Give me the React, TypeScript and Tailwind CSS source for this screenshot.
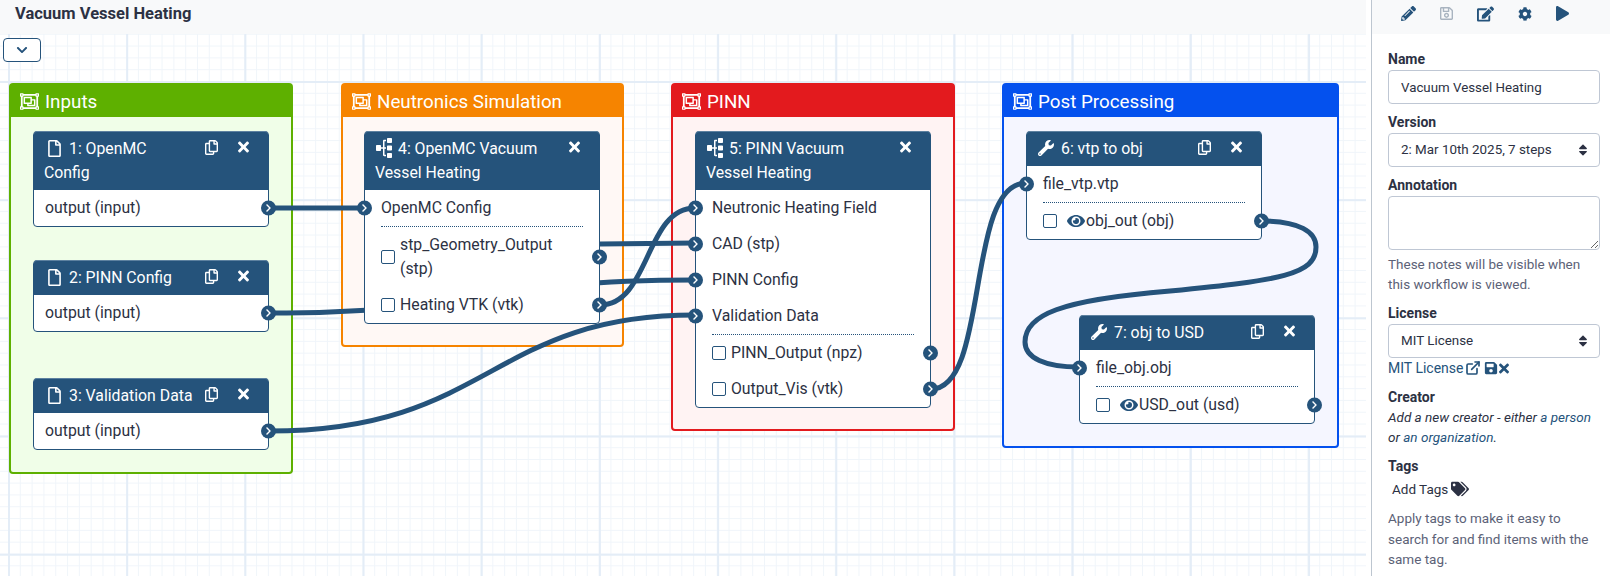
import React from 'react';
import {
  FaChevronDown,
  FaChevronRight,
  FaCog,
  FaEdit,
  FaEye,
  FaPencilAlt,
  FaPlay,
  FaRegCopy,
  FaRegFile,
  FaRegObjectGroup,
  FaRegSave,
  FaSave,
  FaSitemap,
  FaSort,
  FaTags,
  FaTimes,
  FaWrench,
} from 'react-icons/fa';
import { ExternalLink } from 'lucide-react';

type Row =
  | { kind: 'in'; label: string }
  | { kind: 'out'; label: React.ReactNode; eye?: boolean }
  | { kind: 'sep' };

function Terminal({ side }: { side: 'left' | 'right' }) {
  return (
    <div
      className={`absolute top-1/2 -translate-y-1/2 w-[15px] h-[15px] rounded-full bg-[#25537b] flex items-center justify-center text-white z-10 ${
        side === 'left' ? '-left-[8px]' : '-right-[8px]'
      }`}
    >
      <FaChevronRight className="w-[9px] h-[9px]" />
    </div>
  );
}

function NodeRow({ row }: { row: Row }) {
  if (row.kind === 'sep') {
    return <div className="mx-4 border-b border-dotted border-[#25537b]" />;
  }
  if (row.kind === 'in') {
    return (
      <div className="relative px-4 py-1.5 h-9 leading-6">
        <Terminal side="left" />
        {row.label}
      </div>
    );
  }
  return (
    <div className="relative pl-[16px] pr-4 py-1.5 leading-6 flex items-center">
      <span className="shrink-0 w-[14px] h-[14px] mr-[5px] border-[1.5px] border-[#25537b] rounded-[2px] bg-white" />
      {row.eye && <FaEye className="shrink-0 w-[18px] h-[18px] ml-[5px] mr-[1px] text-[#25537b]" />}
      <span>{row.label}</span>
      <Terminal side="right" />
    </div>
  );
}

function PlainOutput({ label }: { label: string }) {
  return (
    <div className="relative px-[11px] py-1.5 h-9 leading-6">
      {label}
      <Terminal side="right" />
    </div>
  );
}

function NodeBox({
  className,
  icon,
  title,
  copy = true,
  children,
}: {
  className: string;
  icon: 'file' | 'sub' | 'tool';
  title: string;
  copy?: boolean;
  children: React.ReactNode;
}) {
  return (
    <div className={`absolute z-20 w-[236px] rounded-[4px] border border-[#25537b] bg-white text-[15.8px] text-[#2c3143] ${className}`}>
      <div className="rounded-t-[3px] bg-[#25537b] text-white pl-[10px] pr-[19px] py-[5px] leading-6 border-t border-t-[#5d81a0] -mt-px whitespace-pre-line">
        <span className="float-right flex items-center h-6 -mt-[2px]">
          {copy && <FaRegCopy className="w-[13px] h-[15px] mr-[20px]" />}
          <FaTimes className="w-[11px] h-[16px]" />
        </span>
        {icon === 'file' && <FaRegFile className="inline w-[13px] h-[17px] ml-[4px] mr-[8px] align-[-3px]" />}
        {icon === 'sub' && <FaSitemap className="inline w-[20px] h-[16px] -ml-[1px] mr-[4px] -rotate-90 align-[-2px]" />}
        {icon === 'tool' && <FaWrench className="inline w-[16px] h-[16px] ml-[1px] mr-[7px] align-[-2px]" />}
        {title}
      </div>
      {children}
    </div>
  );
}

function Rows({ rows }: { rows: Row[] }) {
  return (
    <>
      {rows.map((row, i) => (
        <NodeRow key={i} row={row} />
      ))}
    </>
  );
}

function Frame({
  className,
  head,
  title,
}: {
  className: string;
  head: string;
  title: string;
}) {
  return (
    <div className={`absolute top-[49px] rounded-[4px] border-2 ${className}`}>
      <div className={`h-[32px] text-white text-[18.8px] leading-8 pl-[9px] pt-[1px] flex items-center gap-[6px] ${head}`}>
        <FaRegObjectGroup className="w-[19px] h-[19px]" />
        {title}
      </div>
    </div>
  );
}

function Field({ label, children }: { label: string; children: React.ReactNode }) {
  return (
    <div>
      <div className="font-bold leading-[21px] text-[#2c3143]">{label}</div>
      {children}
    </div>
  );
}

function SelectBox({ value }: { value: string }) {
  return (
    <div className="relative">
      <select
        defaultValue={value}
        className="w-full h-[34px] appearance-none rounded-[4px] border border-[#bfc7d4] bg-white pl-3 text-[13.4px] text-[#2c3143] outline-none"
      >
        <option>{value}</option>
      </select>
      <FaSort className="absolute right-[12px] top-[10px] w-[10px] h-[14px] text-[#2c3143]" />
    </div>
  );
}

export default function App() {
  return (
    <div className="flex h-[576px] w-[1610px] overflow-hidden bg-white font-['Roboto',sans-serif] text-[14px] text-[#2c3143]">
      {/* Editor canvas */}
      <div className="w-[1366px] flex flex-col">
        <div className="h-[34px] shrink-0 bg-[#f8f9fa] pl-[15px] pt-[4px] font-bold text-[16.5px] leading-5 text-[#2c3143]">
          Vacuum Vessel Heating
        </div>
        <div className="relative flex-1 overflow-hidden bg-white bg-[linear-gradient(to_right,#e4edf7_2px,transparent_2px),linear-gradient(to_bottom,#e4edf7_2px,transparent_2px),linear-gradient(to_right,#f0f5fa_1px,transparent_1px),linear-gradient(to_bottom,#f0f5fa_1px,transparent_1px)] bg-[size:118.2px_118.2px,118.2px_118.2px,11.82px_11.82px,11.82px_11.82px] bg-[position:8px_47px]">
          <button className="absolute left-[3px] top-[4px] z-30 w-[38px] h-[24px] rounded-[4px] border border-[#25537b] bg-white flex items-center justify-center text-[#25537b]">
            <FaChevronDown className="w-[12px] h-[12px]" />
          </button>

          <Frame className="left-[9px] w-[284px] h-[391px] border-[#5eb000] bg-[#f0fee8]" head="bg-[#5eb000]" title="Inputs" />
          <Frame className="left-[341px] w-[283px] h-[264px] border-[#f68400] bg-[#fff8f5]" head="bg-[#f68400]" title="Neutronics Simulation" />
          <Frame className="left-[671px] w-[284px] h-[348px] border-[#e31a1e] bg-[#fff3f3]" head="bg-[#e31a1e]" title="PINN" />
          <Frame className="left-[1002px] w-[337px] h-[365px] border-[#0451ee] bg-[#f5f6ff]" head="bg-[#0451ee]" title="Post Processing" />

          <svg className="absolute left-0 top-0 z-10" width="1366" height="542" viewBox="0 34 1366 542" fill="none">
            <g stroke="#25537b" strokeWidth="5">
              <path d="M269 208 L364 208" />
              <path d="M269 313 C480 313 480 280 695 280" />
              <path d="M269 431 C490 431 490 315 695 315" />
              <path d="M600 244 L695 243" />
              <path d="M600 305 C650 305 645 208 695 208" />
              <path d="M931 389 C990 389 965 183 1026 183" />
              <path d="M1261 221 C1300 221 1316 232 1316 247 C1316 275 1280 280 1170 291 C1060 300 1025 315 1025 342 C1025 358 1045 367 1079 367" />
            </g>
          </svg>

          <NodeBox className="left-[33px] top-[97px]" icon="file" title={'1: OpenMC\nConfig'}>
            <PlainOutput label="output (input)" />
          </NodeBox>
          <NodeBox className="left-[33px] top-[226px]" icon="file" title="2: PINN Config">
            <PlainOutput label="output (input)" />
          </NodeBox>
          <NodeBox className="left-[33px] top-[344px]" icon="file" title="3: Validation Data">
            <PlainOutput label="output (input)" />
          </NodeBox>
          <NodeBox className="left-[364px] top-[97px]" icon="sub" title={'4: OpenMC Vacuum\nVessel Heating'} copy={false}>
            <Rows
              rows={[
                { kind: 'in', label: 'OpenMC Config' },
                { kind: 'sep' },
                { kind: 'out', label: 'stp_Geometry_Output (stp)' },
                { kind: 'out', label: 'Heating VTK (vtk)' },
              ]}
            />
          </NodeBox>
          <NodeBox className="left-[695px] top-[97px]" icon="sub" title={'5: PINN Vacuum\nVessel Heating'} copy={false}>
            <Rows
              rows={[
                { kind: 'in', label: 'Neutronic Heating Field' },
                { kind: 'in', label: 'CAD (stp)' },
                { kind: 'in', label: 'PINN Config' },
                { kind: 'in', label: 'Validation Data' },
                { kind: 'sep' },
                { kind: 'out', label: 'PINN_Output (npz)' },
                { kind: 'out', label: 'Output_Vis (vtk)' },
              ]}
            />
          </NodeBox>
          <NodeBox className="left-[1026px] top-[97px]" icon="tool" title="6: vtp to obj">
            <Rows
              rows={[
                { kind: 'in', label: 'file_vtp.vtp' },
                { kind: 'sep' },
                { kind: 'out', label: 'obj_out (obj)', eye: true },
              ]}
            />
          </NodeBox>
          <NodeBox className="left-[1079px] top-[281px]" icon="tool" title="7: obj to USD">
            <Rows
              rows={[
                { kind: 'in', label: 'file_obj.obj' },
                { kind: 'sep' },
                { kind: 'out', label: 'USD_out (usd)', eye: true },
              ]}
            />
          </NodeBox>
        </div>
      </div>

      {/* Side panel */}
      <div className="ml-[5px] w-[239px] border-l border-[#bdc6d0] flex flex-col">
        <div className="h-[34px] shrink-0 bg-[#f8f9fa] pl-[29px] pb-[7px] flex items-center gap-[24px] text-[#25537b]">
          <FaPencilAlt className="w-[15px] h-[15px]" />
          <FaRegSave className="w-[13px] h-[15px] text-[#a9b4c0]" />
          <FaEdit className="w-[17px] h-[16px]" />
          <FaCog className="w-[14px] h-[14px]" />
          <FaPlay className="w-[13px] h-[15px]" />
        </div>
        <div className="pl-4 pr-[10px] pt-[15px]">
          <Field label="Name">
            <input
              readOnly
              value="Vacuum Vessel Heating"
              className="w-full h-[34px] rounded-[4px] border border-[#bfc7d4] bg-white px-3 text-[13.3px] text-[#2c3143] outline-none"
            />
          </Field>
          <div className="mt-2">
            <Field label="Version">
              <SelectBox value="2: Mar 10th 2025, 7 steps" />
            </Field>
          </div>
          <div className="mt-2">
            <Field label="Annotation">
              <textarea className="block w-full h-[54px] rounded-[4px] border border-[#bfc7d4] bg-white outline-none" />
            </Field>
            <p className="mt-1 leading-5 text-[13.5px] text-[#5c6277]">These notes will be visible when this workflow is viewed.</p>
          </div>
          <div className="mt-[9px]">
            <Field label="License">
              <SelectBox value="MIT License" />
            </Field>
            <div className="h-5 flex items-center text-[#25537b]">
              MIT License
              <ExternalLink className="w-[16px] h-[16px] ml-[2px]" strokeWidth={2.5} />
              <FaSave className="w-[14px] h-[14px] ml-[3px] text-[#25537b]" />
              <FaTimes className="w-[10px] h-[15px] ml-[1px] text-[#25537b]" />
            </div>
          </div>
          <div className="mt-[9px]">
            <div className="font-bold leading-5">Creator</div>
            <p className="italic leading-5 text-[13.5px]">
              Add a new creator - either <span className="text-[#25537b]">a person</span> or{' '}
              <span className="text-[#25537b]">an organization</span>.
            </p>
          </div>
          <div className="mt-[9px]">
            <div className="font-bold leading-5">Tags</div>
            <div className="mt-[3px] pl-[4px] leading-5 text-[13.5px] flex items-center gap-[3px]">
              Add Tags <FaTags className="w-[18px] h-[16px]" />
            </div>
            <p className="mt-[9px] leading-[20.5px] text-[13.5px] text-[#5c6277]">
              Apply tags to make it easy to search for and find items with the same tag.
            </p>
          </div>
        </div>
      </div>
    </div>
  );
}
